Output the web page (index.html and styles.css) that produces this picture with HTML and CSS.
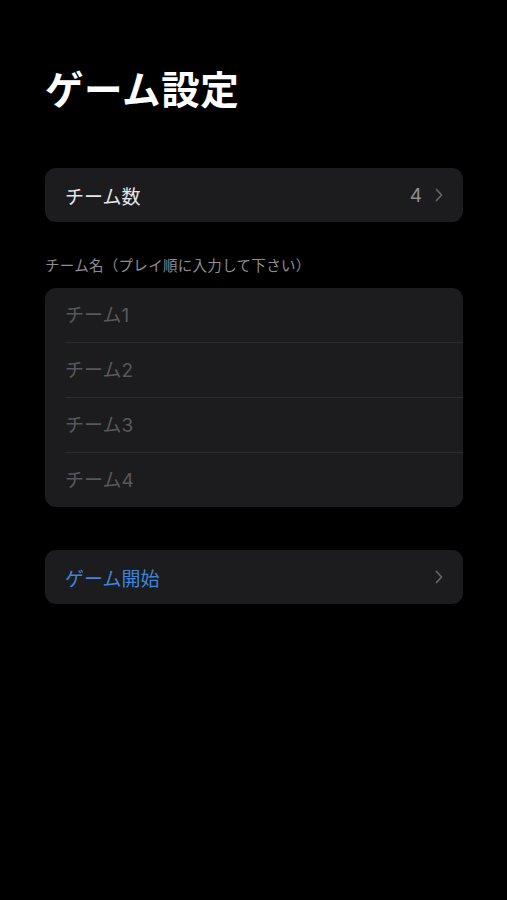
FILE: index.html
```html
<!DOCTYPE html>
<html lang="ja">
<head>
    <meta charset="UTF-8">
    <meta name="viewport" content="width=device-width, initial-scale=1.0">
    <title>ゲーム設定</title>
    <link rel="stylesheet" href="styles.css">
</head>
<body>
    <div class="screen">
        <h1 class="title">ゲーム設定</h1>

        <div class="group">
            <div class="row">
                <span class="row-label">チーム数</span>
                <span class="row-value">4</span>
                <svg class="chevron" viewBox="0 0 8 14" width="8" height="14"><path d="M1.5 1.5 L6.5 7 L1.5 12.5" fill="none" stroke="currentColor" stroke-width="1.8" stroke-linecap="round" stroke-linejoin="round"/></svg>
            </div>
        </div>

        <div class="section-header">チーム名（プレイ順に入力して下さい）</div>
        <div class="group">
            <div class="row field"><input type="text" placeholder="チーム1"></div>
            <div class="row field"><input type="text" placeholder="チーム2"></div>
            <div class="row field"><input type="text" placeholder="チーム3"></div>
            <div class="row field"><input type="text" placeholder="チーム4"></div>
        </div>

        <div class="group start">
            <div class="row">
                <span class="row-label link">ゲーム開始</span>
                <svg class="chevron" viewBox="0 0 8 14" width="8" height="14"><path d="M1.5 1.5 L6.5 7 L1.5 12.5" fill="none" stroke="currentColor" stroke-width="1.8" stroke-linecap="round" stroke-linejoin="round"/></svg>
            </div>
        </div>
    </div>
</body>
</html>
```

FILE: styles.css
```css
body {
    margin: 0;
    background-color: #000;
    color: #fff;
    font-family: Inter, "Noto Sans CJK JP", "Noto Sans", sans-serif;
}

.screen {
    padding: 62px 44px 40px 45px;
}

.title {
    margin: 0 0 50px;
    font-size: 38.5px;
    font-weight: 600;
    line-height: 56px;
    letter-spacing: 0.6px;
}

.group {
    background-color: #1c1c1e;
    border-radius: 11px;
    overflow: hidden;
}

.row {
    display: flex;
    align-items: center;
    height: 54px;
    padding: 0 20px;
}

.field + .field {
    border-top: 1px solid #2c2c2e;
    margin-left: 20px;
    padding-left: 0;
}

.row-label {
    flex: 1;
    font-size: 19px;
    color: #e5e5ea;
}

.row-label.link {
    color: #3f84db;
}

.row-value {
    font-size: 19px;
    color: #8e8e93;
    margin-right: 13px;
}

.chevron {
    color: #636366;
}

.field input {
    flex: 1;
    background: none;
    border: none;
    outline: none;
    font-family: inherit;
    font-size: 19px;
    color: #fff;
    padding: 0;
}

.field input::placeholder {
    color: #58585c;
}

.section-header {
    font-size: 14.5px;
    letter-spacing: 0.3px;
    color: #8e8e93;
    margin: 34px 0 12px;
    line-height: 20px;
}

.start {
    margin-top: 43px;
}
```
